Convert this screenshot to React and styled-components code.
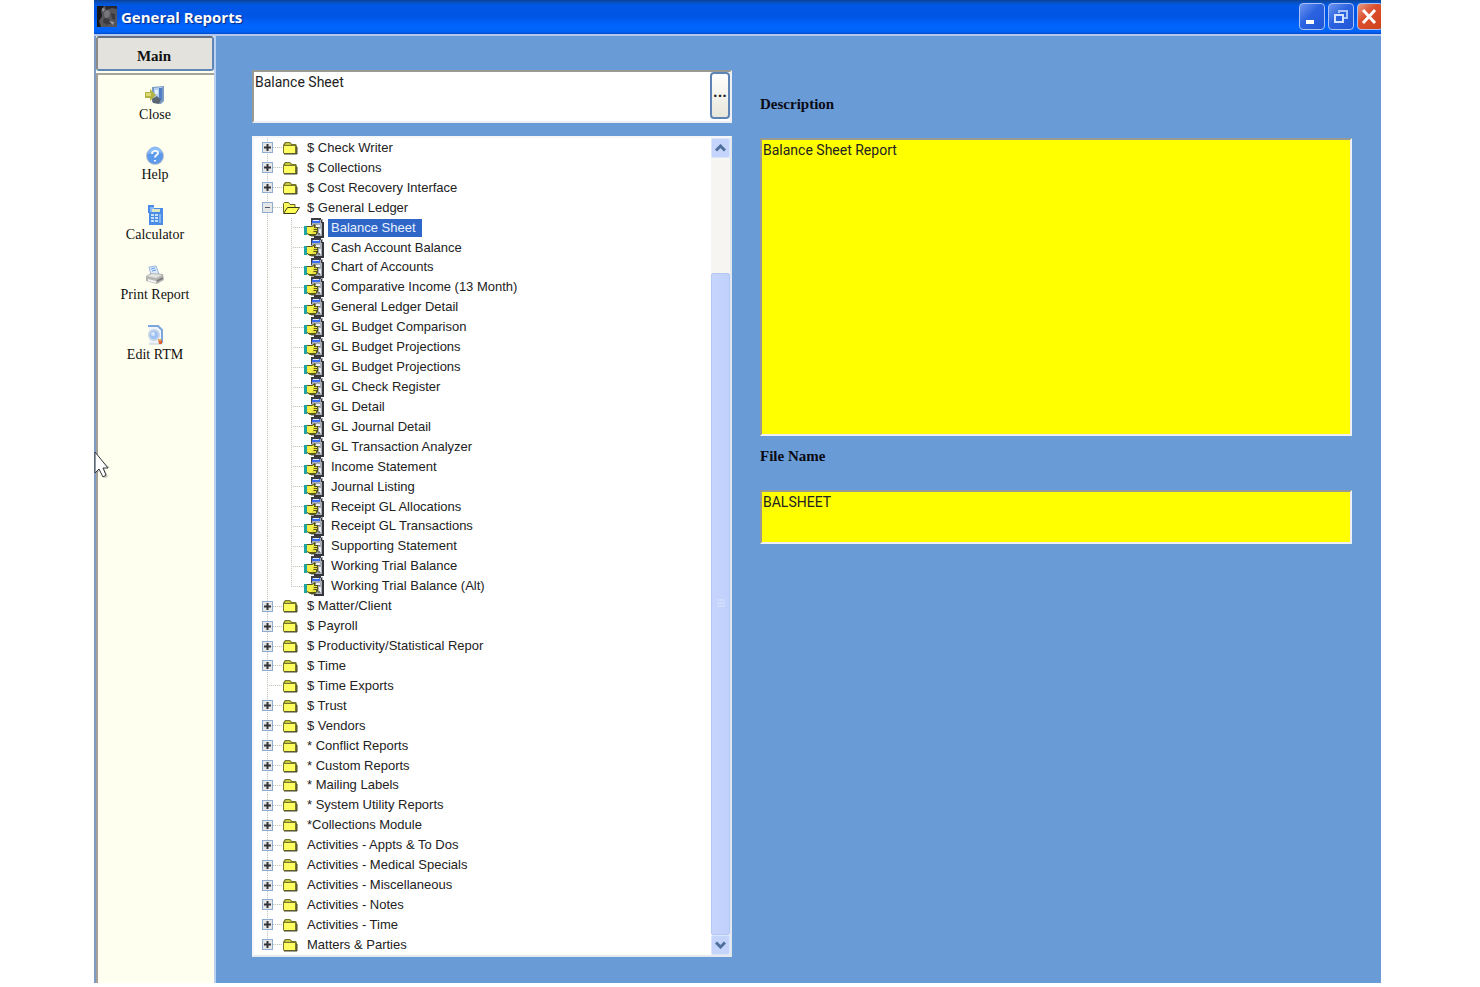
import React, { useState } from 'react';
import styled, { createGlobalStyle } from 'styled-components';

const GlobalStyle = createGlobalStyle`
  * {
    box-sizing: border-box;
  }
  body {
    margin: 0;
    background: #ffffff;
    font-family: Roboto, "Liberation Sans", sans-serif;
    font-size: 14px;
    color: #222222;
  }
  button, textarea {
    font: inherit;
    color: inherit;
    margin: 0;
    padding: 0;
    border: 0;
    outline: 0;
    background: none;
  }
`;

const Window = styled.div`
  display: flex;
  flex-direction: column;
  min-height: calc(100vh - 4px);
  margin: 0 99px 4px 94px;
  background: #699bd6;
`;

const TitleBar = styled.header`
  display: flex;
  align-items: center;
  gap: 4px;
  height: 36px;
  padding: 0 0 3px 3px;
  overflow: hidden;
  background: linear-gradient(#0a4297 0, #0a4fb8 2px, #0058e6 5px, #0054e3 16px, #0066ff 26px, #0062f5 32px, #0048c8 34px, #b4c8ee 34px);
`;

const Title = styled.h1`
  flex: 1;
  margin: 0;
  font-family: "Open Sans", sans-serif;
  font-size: 15px;
  line-height: 32px;
  font-weight: 700;
  color: #ffffff;
  text-shadow: 1px 1px 1px #0a2a80;
`;

const WindowButtons = styled.div`
  display: flex;
  gap: 3px;
  margin-right: -2px;
`;

const WindowButton = styled.button`
  width: 26px;
  height: 27px;
  border: 1px solid #a9c2f6;
  border-radius: 4px;
  background: ${(props) => (props.$close
    ? 'linear-gradient(135deg, #e89a80, #dc5030 40%, #cf4218)'
    : 'linear-gradient(135deg, #6d96f0, #2b62e0 45%, #1f57d8)')};

  svg {
    display: block;
  }
`;

const Body = styled.div`
  flex: 1;
  display: flex;
`;

const Sidebar = styled.nav`
  position: relative;
  display: flex;
  flex-direction: column;
  width: 122px;
  border-left: 2px solid #7f9cc6;
  border-right: 2px solid #b9d2f3;
  background: #fffff0;
`;

const SidebarHead = styled.button`
  height: 35px;
  border: 2px solid #5f86b5;
  border-left-color: #8a8a86;
  border-top-color: #66707e;
  border-radius: 3px;
  background: #e3e2dc;
  font-family: "Liberation Serif", serif;
  font-size: 15px;
  font-weight: 700;
  color: #111111;
  padding: 6px 2px 0 0;
`;

const SidebarList = styled.div`
  flex: 1;
  display: flex;
  flex-direction: column;
  gap: 20px;
  margin-top: 2px;
  padding: 10px 2px 0 0;
  border-top: 2px solid #a5a5a0;
  border-left: 2px solid #a5a098;
`;

const SidebarItem = styled.button`
  display: flex;
  flex-direction: column;
  align-items: center;
  height: 40px;
  font-family: "Liberation Serif", serif;
  font-size: 14px;
  line-height: 20px;
  color: #111111;

  svg {
    display: block;
  }
`;

const Pointer = styled.svg`
  position: absolute;
  left: -3px;
  top: 414px;
`;

const Content = styled.main`
  flex: 1;
  display: grid;
  grid-template-columns: minmax(0, 480fr) minmax(0, 592fr);
  gap: 28px;
  padding: 34px 29px 26px 36px;
`;

const Column = styled.div`
  display: flex;
  flex-direction: column;
`;

const Sunken = styled.div`
  display: flex;
  border: 2px solid;
  border-color: #9a9a94 #edf0f2 #edf0f2 #9a9a94;
  background: ${(props) => (props.$yellow ? '#ffff00' : '#ffffff')};
`;

const PickerBox = styled(Sunken)`
  height: 53px;
  margin-bottom: 13px;
`;

const TextBox = styled.textarea`
  flex: 1;
  min-width: 0;
  display: block;
  resize: none;
  overflow: hidden;
  padding: 0 1px;
  line-height: 21px;
`;

const MoreButton = styled.button`
  display: flex;
  align-items: center;
  justify-content: center;
  width: 20px;
  margin-bottom: 2px;
  padding-bottom: 7px;
  border: 2px solid #5d84b4;
  border-radius: 4px;
  background: linear-gradient(#ffffff, #e8e6da);
  font-size: 16px;
  font-weight: 700;
  line-height: 16px;
`;

const FieldLabel = styled.label`
  font-family: "Liberation Serif", serif;
  font-size: 15px;
  font-weight: 700;
  line-height: 20px;
  color: #0a0a14;
  margin-top: ${(props) => props.$top}px;
  margin-bottom: 24px;
`;

const FieldBox = styled(Sunken)`
  height: ${(props) => props.$height}px;
`;

const TreeBox = styled(Sunken)`
  flex: 1;
  border-color: #f4f6f8 #e2e8ee #e2e8ee #f4f6f8;
`;

const Tree = styled.ul`
  flex: 1;
  display: flex;
  flex-direction: column;
  margin: 0;
  padding: 0 0 0 8px;
  list-style: none;
`;

const TreeRow = styled.li`
  flex: 1;
  display: flex;
  align-items: center;
  min-height: 19px;
`;

const dots = 'repeating-linear-gradient(to bottom, #c9c9c0 0 1px, #f2f2ee 1px 2px)';
const dotsAcross = 'repeating-linear-gradient(to right, #c9c9c0 0 1px, #f2f2ee 1px 2px)';

// vertical line through the cell, with an optional arm to the right
const Branch = styled.span`
  align-self: stretch;
  display: flex;
  align-items: center;
  width: ${(props) => props.$width}px;
  background-image: ${dots}, ${dotsAcross};
  background-repeat: no-repeat;
  background-size: 1px ${(props) => (props.$last ? '50%' : '100%')}, ${(props) => (props.$arm ? '100%' : '0')} 1px;
  background-position: 5px 0, 5px 50%;
`;

const Toggle = styled.button`
  width: 11px;
  height: 11px;
  border: 1px solid #8eabd0;
  background: #e6e8e8;

  svg {
    display: block;
  }
`;

const IconCell = styled.span`
  display: flex;
  width: ${(props) => props.$width}px;

  svg {
    display: block;
  }
`;

const RowText = styled.button`
  height: 18px;
  font-family: "Liberation Sans", sans-serif;
  font-size: 13px;
  line-height: 18px;
  padding: 0 6px 0 3px;
  white-space: pre;
  background: ${(props) => (props.$selected ? '#2f67c8' : 'none')};
  color: ${(props) => (props.$selected ? '#e8f0ff' : '#222222')};
`;

const ScrollBar = styled.div`
  display: flex;
  flex-direction: column;
  width: 19px;
  background: #f6f5f2;
`;

const ScrollArrow = styled.button`
  display: flex;
  align-items: center;
  justify-content: center;
  height: 20px;
  border: 1px solid #dbe5fb;
  border-radius: 2px;
  background: #c4d4fa;
`;

const ScrollSpace = styled.div`
  flex: 115;
`;

const ScrollThumb = styled.div`
  flex: 661;
  display: flex;
  align-items: center;
  justify-content: center;
  border: 1px solid #b3c8f4;
  border-radius: 2px;
  background: linear-gradient(to right, #c6d5fc, #bfd0fb);
`;

const AppIcon = () => (
  <svg width="20" height="21" viewBox="0 0 20 21">
    <rect width="20" height="21" fill="#55555a" />
    <path d="M0 0h7l-3 4 1 6-3 5 2 6H0z" fill="#17171a" />
    <path d="M8 0h12v3l-5-1-6 2z" fill="#2a2a2e" />
    <path d="M8 5l3-1 2 2-1 5-4 1-1-4z" fill="#77777c" />
    <path d="M7 12l5 1 2 4-4 2-4-3zM14 7l4 1v6l-3-1z" fill="#3a3a3f" />
    <path d="M5 2l3 1-2 3zM12 15l5 1-1 3z" fill="#9a9aa0" />
  </svg>
);

const CloseIcon = () => (
  <svg width="20" height="20" viewBox="0 0 20 20">
    <path d="M7 2l12-1v15l-3 3-9-2z" fill="#7d9cc4" />
    <path d="M9 3l8-1v13l-8 1z" fill="#b5d2f2" />
    <path d="M14 3h3v12h-3z" fill="#4f7ec4" />
    <path d="M10 5h3v4h-3z" fill="#e3f1ff" />
    <path d="M7 14l5-3 4 4-2 4-6-1z" fill="#5b6673" />
    <path d="M0 7h5V4l6 6-6 6v-3H0z" fill="#b3b244" />
    <path d="M1 8h5v3H1z" fill="#dcd976" />
  </svg>
);

const HelpIcon = () => (
  <svg width="20" height="20" viewBox="0 0 20 20">
    <circle cx="10" cy="11" r="9" fill="#b8bfca" />
    <circle cx="10" cy="11" r="8" fill="#5c99ea" />
    <path d="M3 9a7 7 0 0 1 14-1c-5-2-10-1-14 1z" fill="#8bbcf8" />
    <path d="M7 9c0-4 6-4 6-1 0 2-3 2-3 4.500M10 15v1.500" fill="none" stroke="#f2f8ff" strokeWidth="2" />
  </svg>
);

const CalculatorIcon = () => (
  <svg width="20" height="20" viewBox="0 0 20 20">
    <path d="M3 0h6v3h9v17H4V8H3z" fill="#4a8ce8" />
    <path d="M5 2h4v5H5z" fill="#8bb8f6" />
    <path d="M7 4h8v3H7z" fill="#dbe8c0" />
    <path d="M6 9h3v2H6zM10 9h3v2h-3zM6 12h3v2H6zM10 12h3v2h-3zM6 15h3v2H6zM10 15h3v2h-3z" fill="#c4dffc" />
    <path d="M14 9h2v9h-2z" fill="#85b4f2" />
  </svg>
);

const PrinterIcon = () => (
  <svg width="20" height="20" viewBox="0 0 20 20">
    <path d="M4 2l7-1 3 8-8 1z" fill="#dcebfb" stroke="#9bb9dc" />
    <path d="M6 4l4-1M7 6l4-1" stroke="#5f98dd" />
    <path d="M1 11l5-3 12 1 1 6-7 4-11-3z" fill="#b5b5b4" />
    <path d="M2 11l5-2 10 1-6 3z" fill="#e3e3e1" />
    <path d="M3 14l8 2v2l-8-2z" fill="#f4f4f2" />
    <path d="M12 15l6-3v2l-6 3z" fill="#7c7c7c" />
  </svg>
);

const EditIcon = () => (
  <svg width="20" height="20" viewBox="0 0 20 20">
    <path d="M4 1h9l4 4v14H4z" fill="#edf4fc" />
    <path d="M3 1h10l4 4v13" fill="none" stroke="#7ba5dc" strokeWidth="2" />
    <path d="M4 19h13" stroke="#c2ccd8" />
    <circle cx="9" cy="10" r="5" fill="#9cc1f2" stroke="#c6d5e6" strokeWidth="2" />
    <circle cx="8" cy="9" r="2" fill="#d6e7fc" />
    <path d="M13 14l4 1v4h-3z" fill="#de6238" />
    <path d="M13 14h3v2h-2z" fill="#e6b048" />
  </svg>
);

const Folder = () => (
  <svg width="16" height="14" viewBox="0 0 16 14">
    <path d="M1 12V4l2-3h5l2 2h4l1 2v8H2z" fill="#77772a" />
    <path d="M3 3l1-1h4l1 2H3z" fill="#c6c640" />
    <path d="M2 5h11v7H2z" fill="#ffff62" />
    <path d="M2 13h13V6" fill="none" stroke="#44442c" />
  </svg>
);

const OpenFolder = () => (
  <svg width="19" height="14" viewBox="0 0 19 14">
    <path d="M1.500 11.500v-9l1-1h4l1.500 2h5v3" fill="#f8f85c" stroke="#66661e" />
    <path d="M1.500 12.500l4-6h12l-4 6z" fill="#ffff55" stroke="#3a3a14" />
  </svg>
);

const ReportIcon = () => (
  <svg width="20" height="20" viewBox="0 0 20 20">
    <path d="M7 1h12v18H7z" fill="#a9adb6" />
    <path d="M8 2h8v3H8z" fill="#3a6cf0" />
    <path d="M9 2h6v1H9z" fill="#dfe9ff" />
    <path d="M7 0h10v2H7zM7 1h1v6H7z" fill="#3c3c42" />
    <path d="M17 2h1v2h2v16h-2V5h-1zM10 18h9v2h-9z" fill="#35353b" />
    <path d="M11 7h5v2h-5zM15 11h2v5h-2z" fill="#eceff4" />
    <path d="M12 9h4v1h-4zM14 15h2v2h-2z" fill="#75777e" />
    <path d="M0 8h3v9H0z" fill="#1fa3a3" />
    <path d="M3 8h5l3-2 1 2-1 1h3v6l-3 3H6l-3-2z" fill="#55551a" />
    <path d="M3 9h5l2-1v2l-1 6H5l-2-1z" fill="#f4f04a" />
    <path d="M9 10h4v1H9zM9 12h4v1H9zM8 14h4v2H8z" fill="#e6e040" />
  </svg>
);

const Chevron = ({ down }) => (
  <svg width="11" height="8" viewBox="0 0 11 8">
    <path d={down ? 'M1 1.500l4.500 4.500L10 1.500' : 'M1 6.500L5.500 2 10 6.500'} fill="none" stroke="#4f6f9c" strokeWidth="3" />
  </svg>
);

const tools = [
  { name: 'Close', Icon: CloseIcon },
  { name: 'Help', Icon: HelpIcon },
  { name: 'Calculator', Icon: CalculatorIcon },
  { name: 'Print Report', Icon: PrinterIcon },
  { name: 'Edit RTM', Icon: EditIcon },
];

const ledgerReports = [
  'Balance Sheet',
  'Cash Account Balance',
  'Chart of Accounts',
  'Comparative Income (13 Month)',
  'General Ledger Detail',
  'GL Budget Comparison',
  'GL Budget Projections',
  'GL Budget Projections',
  'GL Check Register',
  'GL Detail',
  'GL Journal Detail',
  'GL Transaction Analyzer',
  'Income Statement',
  'Journal Listing',
  'Receipt GL Allocations',
  'Receipt GL Transactions',
  'Supporting Statement',
  'Working Trial Balance',
  'Working Trial Balance (Alt)',
];

const foldersBefore = ['$ Check Writer', '$ Collections', '$ Cost Recovery Interface'];

const foldersAfter = [
  '$ Matter/Client',
  '$ Payroll',
  '$ Productivity/Statistical Repor',
  '$ Time',
  '$ Time Exports',
  '$ Trust',
  '$ Vendors',
  '* Conflict Reports',
  '* Custom Reports',
  '* Mailing Labels',
  '* System Utility Reports',
  '*Collections Module',
  'Activities - Appts & To Dos',
  'Activities - Medical Specials',
  'Activities - Miscellaneous',
  'Activities - Notes',
  'Activities - Time',
  'Matters & Parties',
];

function FolderRow({ name, open, last }) {
  return (
    <TreeRow>
      <Branch $width={20} $arm $last={last}>
        {name !== '$ Time Exports' && (
          <Toggle type="button" aria-label={(open ? 'Collapse ' : 'Expand ') + name}>
            <svg width="9" height="9" viewBox="0 0 9 9">
              <path d={open ? 'M2 4.500h5' : 'M1 4.500h7M4.500 1v7'} stroke={open ? '#555566' : '#333338'} strokeWidth={open ? 1 : 2} />
            </svg>
          </Toggle>
        )}
      </Branch>
      <IconCell $width={22}>{open ? <OpenFolder /> : <Folder />}</IconCell>
      <RowText type="button">{name}</RowText>
    </TreeRow>
  );
}

function App() {
  const [selected, setSelected] = useState(0);

  return (
    <>
      <GlobalStyle />
      <Window>
        <TitleBar>
          <AppIcon />
          <Title>General Reports</Title>
          <WindowButtons>
            <WindowButton type="button" aria-label="Minimize">
              <svg width="24" height="25" viewBox="0 0 24 25">
                <path d="M6 16h8v4H6z" fill="#ffffff" />
              </svg>
            </WindowButton>
            <WindowButton type="button" aria-label="Restore">
              <svg width="24" height="25" viewBox="0 0 24 25">
                <path d="M10 9V7h8v7h-3" fill="none" stroke="#a9c4fa" strokeWidth="2" />
                <path d="M6 11h8v7H6z" fill="none" stroke="#d4e2ff" strokeWidth="2" />
              </svg>
            </WindowButton>
            <WindowButton type="button" aria-label="Close window" $close>
              <svg width="24" height="25" viewBox="0 0 24 25">
                <path d="M5 6l12 13M17 6L5 19" stroke="#ffffff" strokeWidth="3" />
              </svg>
            </WindowButton>
          </WindowButtons>
        </TitleBar>
        <Body>
          <Sidebar>
            <SidebarHead type="button">Main</SidebarHead>
            <SidebarList>
              {tools.map(({ name, Icon }) => (
                <SidebarItem type="button" key={name}>
                  <Icon />
                  {name}
                </SidebarItem>
              ))}
            </SidebarList>
            <Pointer width="20" height="30" viewBox="0 0 20 30">
              <path d="M3 5l14 13h-6l4 9-4 1-4-8-3 4z" fill="#8a8a84" opacity="0.5" />
              <path d="M2 2v21l4-4 4 8 3-2-3-7h5z" fill="#ffffff" stroke="#33363c" />
            </Pointer>
          </Sidebar>
          <Content>
            <Column>
              <PickerBox>
                <TextBox aria-label="Report" defaultValue="Balance Sheet" />
                <MoreButton type="button" aria-label="Choose report">...</MoreButton>
              </PickerBox>
              <TreeBox>
                <Tree>
                  {foldersBefore.map((name) => <FolderRow key={name} name={name} />)}
                  <FolderRow name="$ General Ledger" open />
                  {ledgerReports.map((name, i) => (
                    <TreeRow key={i}>
                      <Branch $width={24} />
                      <Branch $width={18} $arm $last={i === ledgerReports.length - 1} />
                      <IconCell $width={24}><ReportIcon /></IconCell>
                      <RowText type="button" $selected={selected === i} onClick={() => setSelected(i)}>{name}</RowText>
                    </TreeRow>
                  ))}
                  {foldersAfter.map((name, i) => (
                    <FolderRow key={name} name={name} last={i === foldersAfter.length - 1} />
                  ))}
                </Tree>
                <ScrollBar>
                  <ScrollArrow type="button" aria-label="Scroll up"><Chevron /></ScrollArrow>
                  <ScrollSpace />
                  <ScrollThumb>
                    <svg width="8" height="9" viewBox="0 0 8 9">
                      <path d="M0 1h8M0 4h8M0 7h8" stroke="#dce7ff" />
                    </svg>
                  </ScrollThumb>
                  <ScrollArrow type="button" aria-label="Scroll down"><Chevron down /></ScrollArrow>
                </ScrollBar>
              </TreeBox>
            </Column>
            <Column>
              <FieldLabel htmlFor="description" $top={24}>Description</FieldLabel>
              <FieldBox $yellow $height={298}>
                <TextBox id="description" readOnly value="Balance Sheet Report" />
              </FieldBox>
              <FieldLabel htmlFor="filename" $top={10}>File Name</FieldLabel>
              <FieldBox $yellow $height={54}>
                <TextBox id="filename" readOnly value="BALSHEET" />
              </FieldBox>
            </Column>
          </Content>
        </Body>
      </Window>
    </>
  );
}

export default App;
